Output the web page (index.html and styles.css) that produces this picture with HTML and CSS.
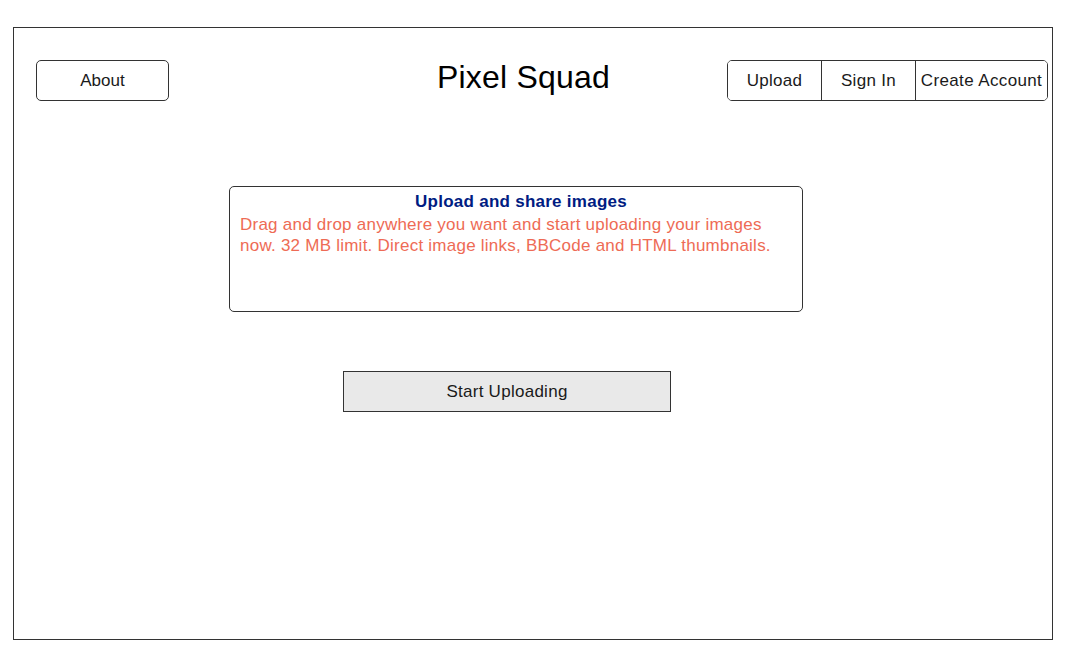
FILE: index.html
```html
<!DOCTYPE html>
<html>
<head>
<meta charset="utf-8">
<link rel="stylesheet" href="styles.css">
</head>
<body>
<div class="frame">
  <header class="header">
    <button class="btn about">About</button>
    <h1 class="title">Pixel Squad</h1>
    <nav class="group">
      <button class="gbtn upload">Upload</button>
      <button class="gbtn signin">Sign In</button>
      <button class="gbtn create">Create Account</button>
    </nav>
  </header>
  <main class="main">
    <section class="box">
      <h2 class="box-title">Upload and share images</h2>
      <p class="box-text">Drag and drop anywhere you want and start uploading your images now. 32 MB limit. Direct image links, BBCode and HTML thumbnails.</p>
    </section>
    <button class="start">Start Uploading</button>
  </main>
</div>
</body>
</html>
```

FILE: styles.css
```css
* { box-sizing: border-box; }
html, body { margin: 0; padding: 0; background: #fff; }
body { font-family: "Liberation Sans", Arial, sans-serif; color: #1a1a1a; }

.frame {
  margin: 27px 0 0 13px;
  width: 1040px;
  height: 613px;
  border: 1px solid #333;
  display: flex;
  flex-direction: column;
}

.header {
  display: flex;
  align-items: flex-start;
  padding: 32px 4px 0 22px;
}

.btn, .gbtn, .start {
  font-family: "Liberation Sans", Arial, sans-serif;
  font-size: 17px;
  color: #1a1a1a;
  background: #fff;
  cursor: pointer;
  padding: 0;
}

.about {
  width: 133px;
  height: 41px;
  border: 1px solid #333;
  border-radius: 5px;
}

.title {
  margin: 0 0 0 268px;
  font-weight: normal;
  font-size: 32px;
  letter-spacing: 0.2px;
  line-height: 34px;
  color: #000;
}

.group {
  margin-left: auto;
  display: flex;
  border: 1px solid #333;
  border-radius: 5px;
  height: 41px;
  overflow: hidden;
}

.gbtn {
  border: none;
  height: 39px;
  border-left: 1px solid #333;
  letter-spacing: 0.3px;
}
.gbtn:first-child { border-left: none; }
.upload { width: 93px; }
.signin { width: 94px; }
.create { width: 132px; letter-spacing: 0.37px; }

.main {
  display: flex;
  flex-direction: column;
  align-items: flex-start;
  padding: 85px 0 0 215px;
}

.box {
  width: 574px;
  height: 126px;
  border: 1px solid #333;
  border-radius: 5px;
  padding: 4px 10px 0 10px;
}

.box-title {
  margin: 0 0 2px;
  padding-left: 10px;
  text-align: center;
  font-size: 17px;
  letter-spacing: 0.26px;
  line-height: 21px;
  font-weight: bold;
  color: #001c82;
}

.box-text {
  margin: 0;
  font-size: 17px;
  letter-spacing: 0.24px;
  line-height: 21px;
  color: #ee6b55;
}

.start {
  margin: 59px 0 0 114px;
  width: 328px;
  height: 41px;
  background: #e9e9e9;
  border: 1px solid #333;
  letter-spacing: 0.27px;
}
```
